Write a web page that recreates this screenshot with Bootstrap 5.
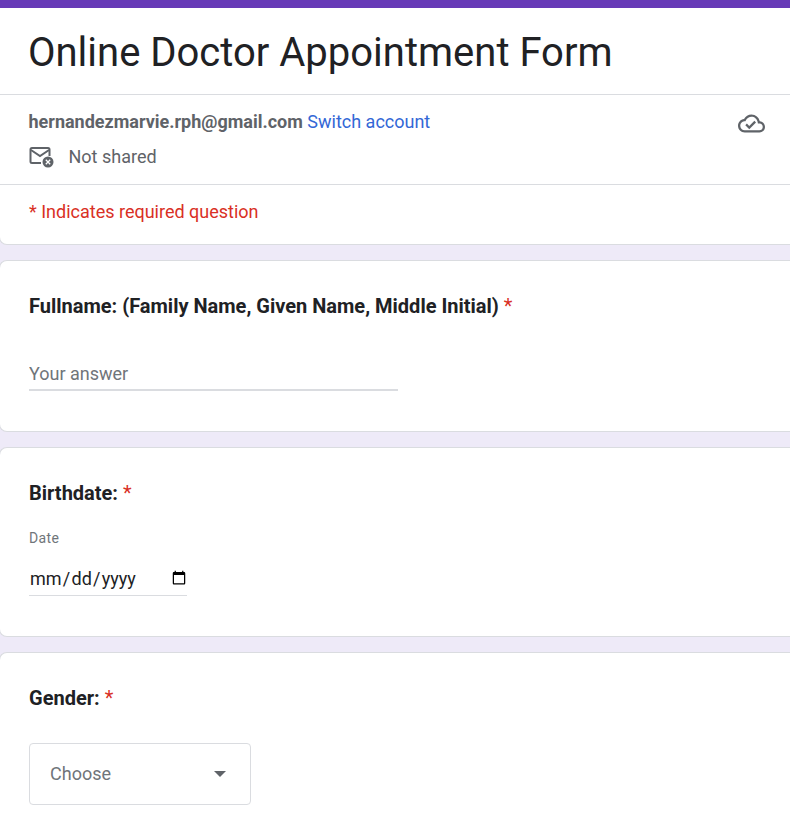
<!DOCTYPE html>
<html lang="en">
<head>
<meta charset="utf-8">
<title>Online Doctor Appointment Form</title>
<link href="https://cdn.jsdelivr.net/npm/bootstrap@5.3.0/dist/css/bootstrap.min.css" rel="stylesheet">
<style>
html, body { height: 100%; }
body { background: #eeeaf8; font-family: Roboto, "Liberation Sans", sans-serif; color: #202124; display: flex; flex-direction: column; }
.topline { height: 8px; flex: none; background: #673ab7; }
.sheet { background: #fff; border: 1px solid #dadce0; border-right: 0; border-radius: 0 0 0 8px; margin: 0 0 15px -1px; flex: none; }
.sheet-q { border-radius: 8px 0 0 8px; padding: 33px 29px 24px; }
.sheet-last { flex: 1 1 auto; margin-bottom: 0; padding-bottom: 0; border-bottom: 0; border-radius: 8px 0 0 0; }
.head-card { border-top: 0; }
.form-title { font-size: 40px; font-weight: 400; line-height: 48px; color: #202124; margin: 0; padding: 21px 28px 0; border-bottom: 1px solid #dadce0; height: 87px; }
.acct { height: 90px; padding: 0 25px 0 28.5px; border-bottom: 1px solid #dadce0; }
.acct-line { font-size: 18px; line-height: 24px; padding-top: 15px; color: #5f6368; }
.acct-mail { font-weight: 700; font-size: 18px; }
.acct-switch { color: #3367d6; text-decoration: none; }
.share-line { gap: 14px; margin-top: 11px; font-size: 18px; line-height: 24px; color: #5f6368; }
.cloud-ico { margin-top: 15px; }
.req-note { color: #d93025; font-size: 18px; line-height: 24px; padding: 15px 29px 20px; height: 59px; }
.q-title { font-size: 20px; font-weight: 700; line-height: 24px; color: #202124; margin: 0; }
.req-star { color: #d93025; font-weight: 400; }
.ans-text { width: 369px; margin-top: 40px; height: 33px; border: 0; border-bottom: 2px solid #dadce0; font-size: 18px; line-height: 24px; padding: 2px 0 3px; font-family: inherit; color: #202124; outline: 0; display: block; background: transparent; }
.ans-text::placeholder { color: #70757a; opacity: 1; }
.date-cap { font-size: 14px; line-height: 20px; color: #70757a; margin-top: 23px; letter-spacing: .4px; }
.date-in { display: block; width: 158px; height: 35px; margin-top: 13px; padding: 0 0 0 1px; border: 0; border-bottom: 1px solid #dadce0; font-family: inherit; font-size: 18px; color: #202124; background: transparent; outline: 0; }
.date-in::-webkit-datetime-edit-text { padding: 0 1.25px; }
.date-in::-webkit-calendar-picker-indicator { margin: 0; padding: 0; width: 16px; height: 16px; }
.choose-box { width: 222px; height: 62px; margin-top: 33px; padding: 0 24px 2px 20px; border: 1px solid #dadce0; border-radius: 4px; font-size: 18px; color: #70757a; }
.caret-shape { width: 0; height: 0; border-left: 6.5px solid transparent; border-right: 6.5px solid transparent; border-top: 6.5px solid #5f6368; margin-top: 2px; }
.q-end-a { height: 16px; }
.q-end-b { height: 16px; }
</style>
</head>
<body>
<div class="topline"></div>
<div class="sheet head-card">
  <h1 class="form-title">Online Doctor Appointment Form</h1>
  <div class="acct d-flex justify-content-between">
    <div>
      <div class="acct-line"><span class="acct-mail">hernandezmarvie.rph@gmail.com</span> <a class="acct-switch" href="#">Switch account</a></div>
      <div class="share-line d-flex align-items-center">
        <svg width="26" height="22" viewBox="1 0 26 22" fill="none" aria-hidden="true">
          <path d="M13 17H4a1.5 1.5 0 0 1-1.5-1.5v-12A1.5 1.5 0 0 1 4 2h16a1.5 1.5 0 0 1 1.5 1.5V10" stroke="#5f6368" stroke-width="2"/>
          <path d="M3 4l9 6 9-6" stroke="#5f6368" stroke-width="2"/>
          <circle cx="20" cy="16" r="5.5" fill="#5f6368"/>
          <path d="M17.8 13.8l4.4 4.4M22.2 13.8l-4.4 4.4" stroke="#fff" stroke-width="1.3"/>
        </svg>
        <span>Not shared</span>
      </div>
    </div>
    <svg class="cloud-ico" width="27" height="27" viewBox="0 0 24 24" fill="#5f6368" aria-hidden="true">
      <path d="M19.35 10.04C18.67 6.59 15.64 4 12 4 9.11 4 6.6 5.64 5.35 8.04 2.34 8.36 0 10.91 0 14c0 3.31 2.69 6 6 6h13c2.76 0 5-2.24 5-5 0-2.64-2.05-4.78-4.65-4.96zM19 18H6c-2.21 0-4-1.79-4-4 0-2.05 1.53-3.76 3.56-3.97l1.07-.11.5-.95C8.08 7.14 9.94 6 12 6c2.62 0 4.88 1.86 5.39 4.43l.3 1.5 1.53.11c1.56.1 2.78 1.41 2.78 2.96 0 1.65-1.35 3-3 3zM10 14.17L7.91 12.08 6.5 13.5 10 17l6-6-1.41-1.41z"/>
    </svg>
  </div>
  <div class="req-note">* Indicates required question</div>
</div>
<div class="sheet sheet-q">
  <h2 class="q-title">Fullname: (Family Name, Given Name, Middle Initial) <span class="req-star">*</span></h2>
  <input class="ans-text" type="text" placeholder="Your answer">
  <div class="q-end-a"></div>
</div>
<div class="sheet sheet-q">
  <h2 class="q-title">Birthdate: <span class="req-star">*</span></h2>
  <div class="date-cap">Date</div>
  <input class="date-in" type="date">
  <div class="q-end-b"></div>
</div>
<div class="sheet sheet-q sheet-last">
  <h2 class="q-title">Gender: <span class="req-star">*</span></h2>
  <div class="choose-box d-flex align-items-center justify-content-between">
    <span>Choose</span><span class="caret-shape"></span>
  </div>
</div>
<script src="https://cdn.jsdelivr.net/npm/bootstrap@5.3.0/dist/js/bootstrap.bundle.min.js"></script>
</body>
</html>
